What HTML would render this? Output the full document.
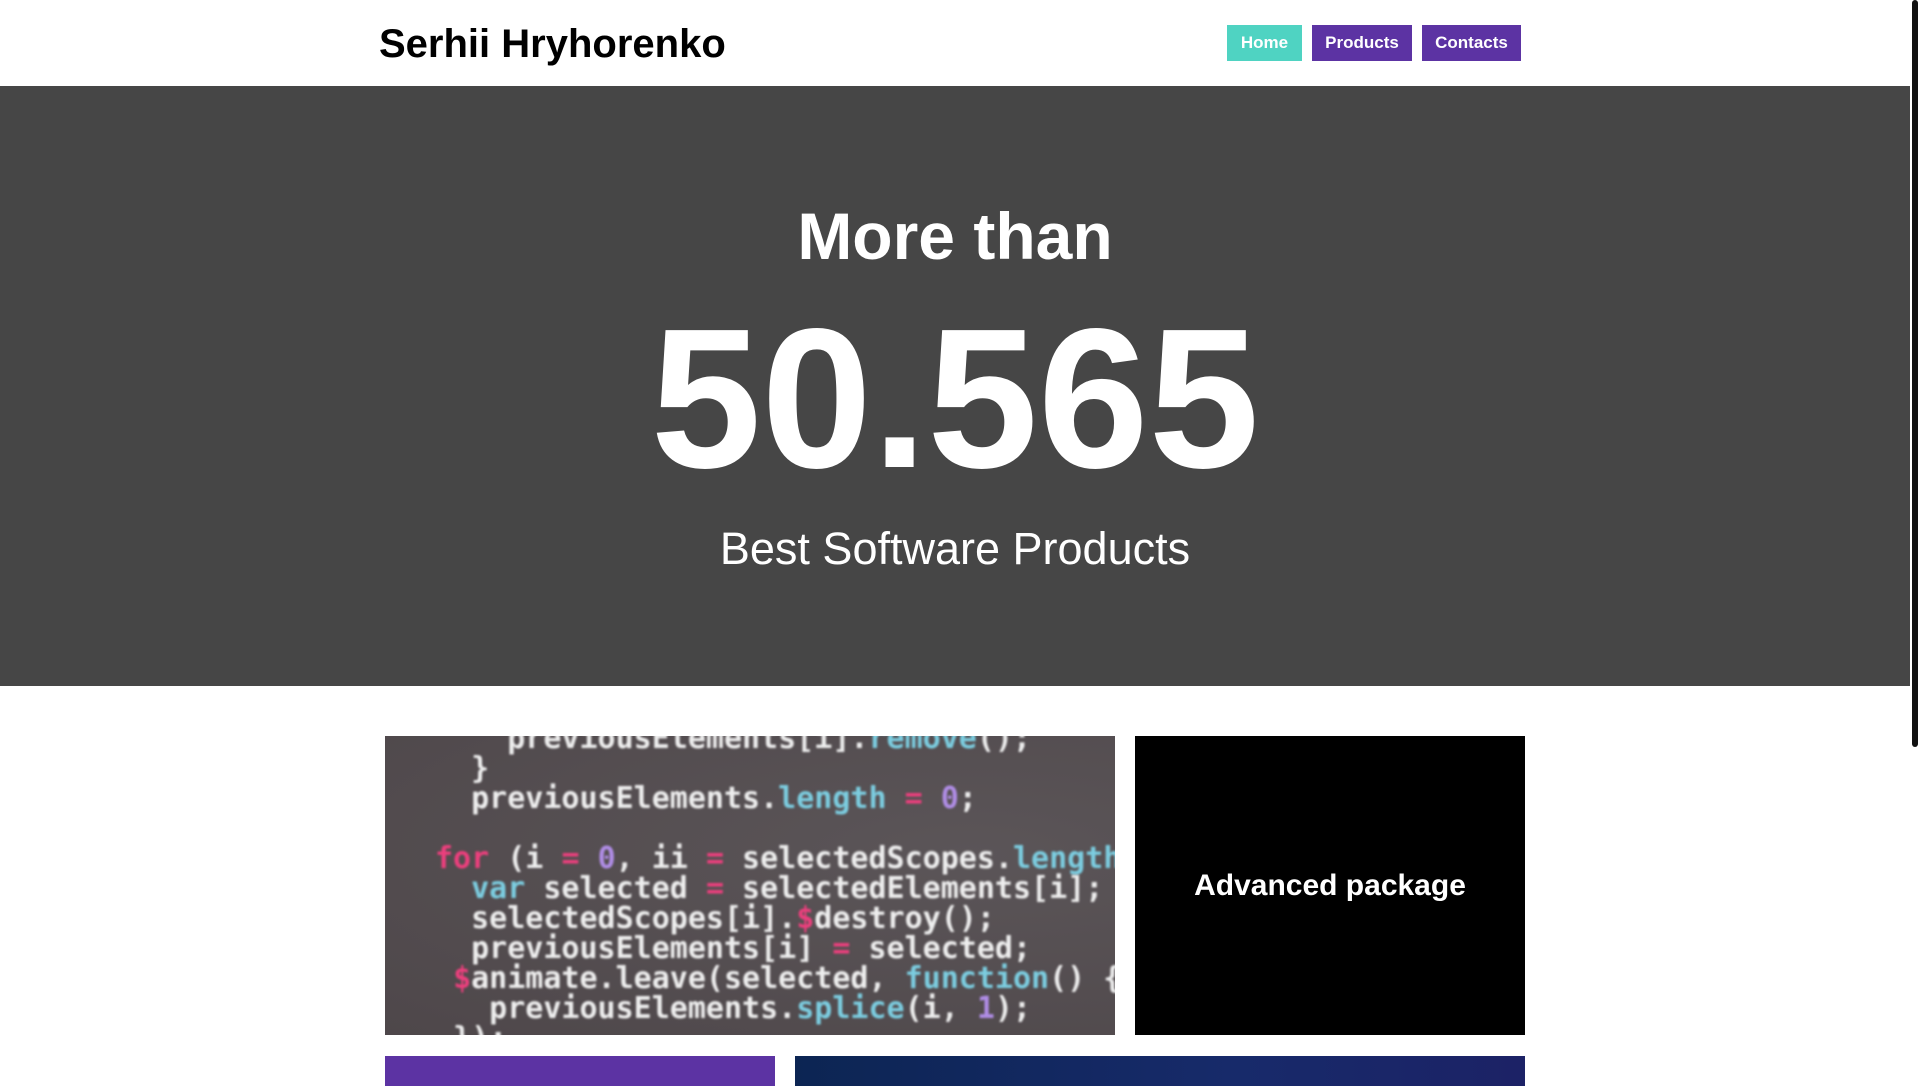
<!DOCTYPE html>
<html><head><meta charset="utf-8"><style>
*{margin:0;padding:0;box-sizing:border-box}
html,body{width:1920px;height:1080px;overflow:hidden;background:#fff;font-family:"Liberation Sans",sans-serif}
.page{position:absolute;left:0;top:0;width:1910px;height:1080px}
.title{position:absolute;left:379px;top:22px;font-size:40px;font-weight:bold;color:#000}
.btn{position:absolute;top:25px;height:36px;line-height:36px;text-align:center;color:#fff;font-size:17px;font-weight:bold;background:#5c33a3}
.hero{position:absolute;left:0;top:86px;width:1910px;height:600px;background:#464646;color:#fff;text-align:center}
.h1{position:absolute;width:100%;top:117px;font-size:66px;font-weight:bold;line-height:1}
.h2{position:absolute;width:100%;top:214px;font-size:199px;font-weight:bold;line-height:1}
.h3{position:absolute;width:100%;top:440px;font-size:45px;line-height:1}
.code{position:absolute;left:385px;top:736px;width:730px;height:299px;background:radial-gradient(ellipse at 80% 40%,#5b5558,#4e474a);overflow:hidden;font-family:"DejaVu Sans Mono",monospace;font-weight:bold;font-size:30px;color:#eee;white-space:pre;line-height:30px}
.code div{position:absolute;left:0;top:0;padding-left:50px}
.b{color:#7ccde0}.p{color:#ec3f7d}.v{color:#b08de6}
.blk{position:absolute;left:1135px;top:736px;width:390px;height:299px;background:#000;color:#fff;font-weight:bold;font-size:30px;text-align:center;line-height:299px}
.sb{position:absolute;left:1912px;top:0;width:6px;height:747px;background:#111;border-radius:3px}
</style></head><body><div class="page">
<div class="title">Serhii Hryhorenko</div>
<div class="btn" style="left:1227px;width:75px;background:#4fd3c2">Home</div>
<div class="btn" style="left:1312px;width:100px">Products</div>
<div class="btn" style="left:1422px;width:99px">Contacts</div>
<div class="hero">
<div class="h1">More than</div>
<div class="h2">50.565</div>
<div class="h3">Best Software Products</div>
</div>
<div class="code"><div style="top:-12px;filter:blur(1px)">    previousElements[i].<span class="b">remove</span>();
  }
  previousElements.<span class="b">length</span> <span class="p">=</span> <span class="v">0</span>;

<span class="p">for</span> (i <span class="p">=</span> <span class="v">0</span>, ii <span class="p">=</span> selectedScopes.<span class="b">length</span>; i <span class="p">&lt;</span> ii; <span class="p">++i</span>
  <span class="b">var</span> selected <span class="p">=</span> selectedElements[i];
  selectedScopes[i].<span class="p">$</span>destroy();
  previousElements[i] <span class="p">=</span> selected;
 <span class="p">$</span>animate.leave(selected, <span class="b">function</span>() {
   previousElements.<span class="b">splice</span>(i, <span class="v">1</span>);
 });</div></div>
<div class="blk">Advanced package</div>
<div style="position:absolute;left:385px;top:1056px;width:390px;height:30px;background:#5c33a3"></div>
<div style="position:absolute;left:795px;top:1056px;width:730px;height:30px;background:linear-gradient(90deg,#0c2553,#172a6a 60%,#1c2266)"></div>
</div>
<div class="sb"></div>
</body></html>
